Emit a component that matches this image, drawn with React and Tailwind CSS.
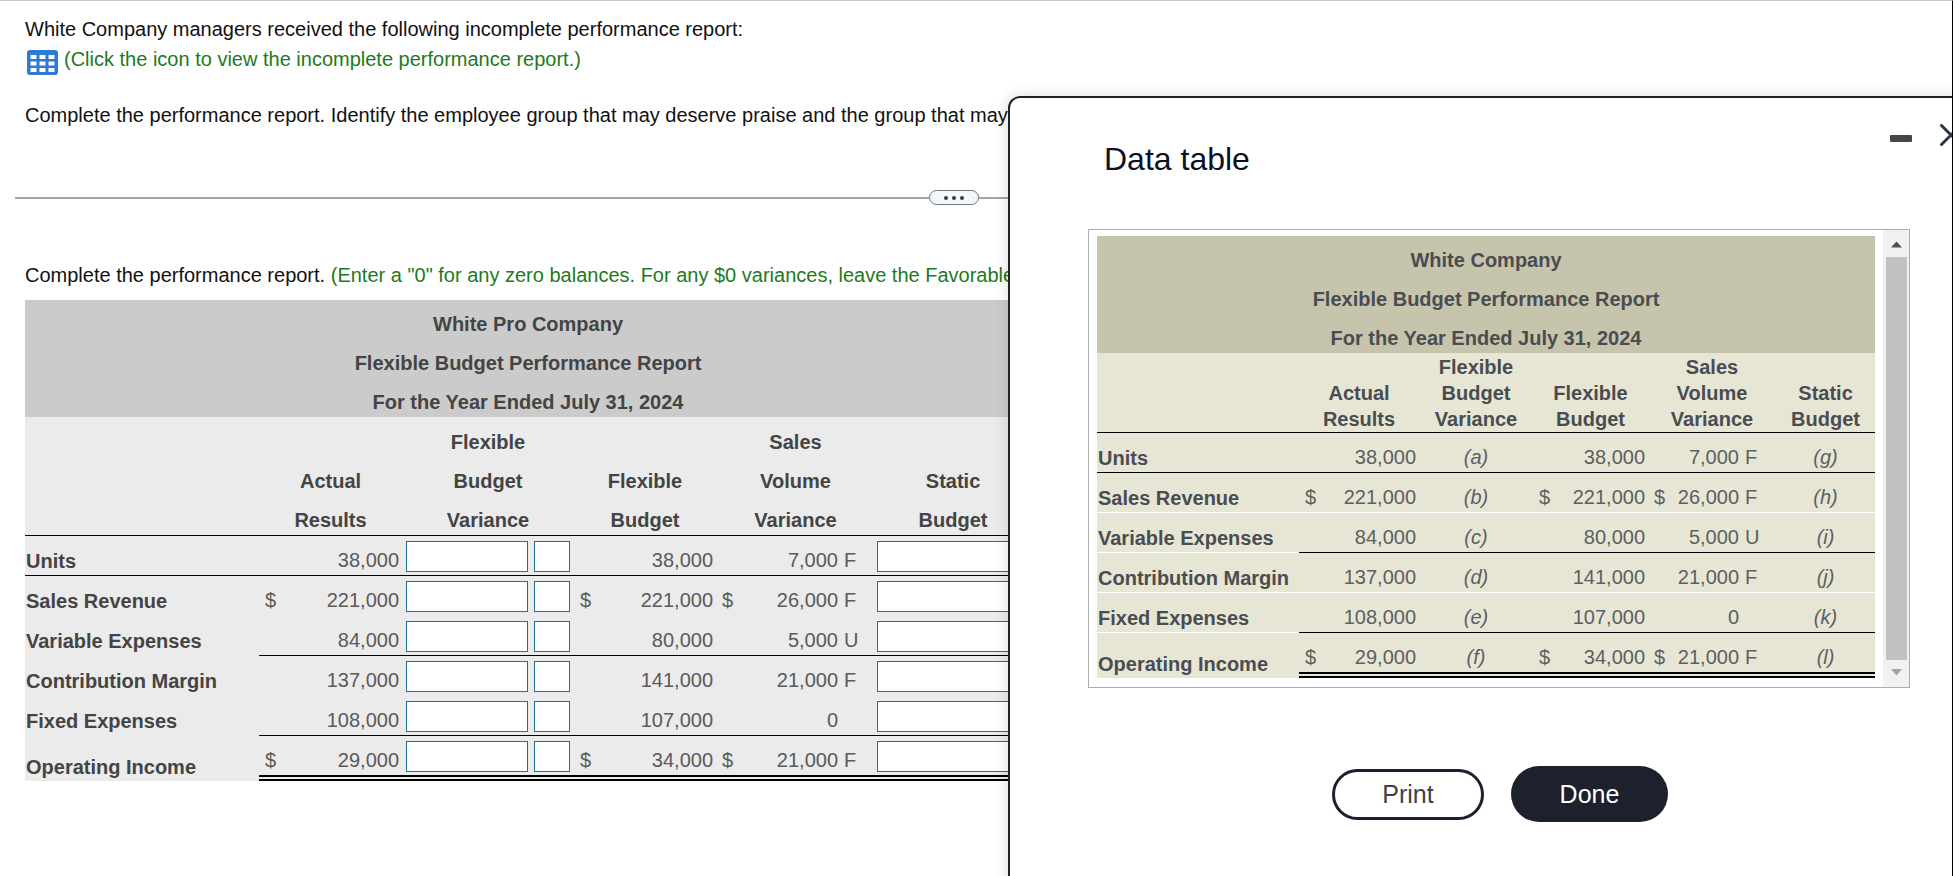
import React from "react";

const rows = [
  { label: "Units", actual: "38,000", flexible: "38,000", volume: "7,000", flag: "F", keys: ["(a)", "(g)"], line: "full" },
  { label: "Sales Revenue", dollar: true, actual: "221,000", flexible: "221,000", volume: "26,000", flag: "F", keys: ["(b)", "(h)"], line: "none" },
  { label: "Variable Expenses", actual: "84,000", flexible: "80,000", volume: "5,000", flag: "U", keys: ["(c)", "(i)"], line: "figures" },
  { label: "Contribution Margin", actual: "137,000", flexible: "141,000", volume: "21,000", flag: "F", keys: ["(d)", "(j)"], line: "none" },
  { label: "Fixed Expenses", actual: "108,000", flexible: "107,000", volume: "0", flag: "", keys: ["(e)", "(k)"], line: "figures" },
  { label: "Operating Income", dollar: true, actual: "29,000", flexible: "34,000", volume: "21,000", flag: "F", keys: ["(f)", "(l)"], line: "double" },
];

const headings = [
  ["Actual", "Results"],
  ["Flexible", "Budget", "Variance"],
  ["Flexible", "Budget"],
  ["Sales", "Volume", "Variance"],
  ["Static", "Budget"],
];

const figureLine = {
  full: "border-b border-black",
  none: "border-b border-transparent",
  figures: "border-b border-black",
  double: "border-b-6 border-double border-black",
};

const labelLine = {
  full: "border-b border-black",
  none: "border-b border-transparent",
  figures: "border-b border-transparent",
  double: "",
};

const figureLineData = {
  ...figureLine,
  none: "border-b border-white",
};

const labelLineData = {
  ...labelLine,
  none: "border-b border-white",
  figures: "border-b border-white",
};

const Amount = ({ dollar, children }) => (
  <div className="flex justify-between pl-[6px] pr-[3px]">
    <span>{dollar ? "$" : ""}</span>
    <span>{children}</span>
  </div>
);

const Volume = ({ row }) => (
  <div className="flex justify-between pl-[6px]">
    <span>{row.dollar ? "$" : ""}</span>
    <span className="flex">
      {row.volume}
      <span className="w-[37px] pl-[6px] text-left">{row.flag}</span>
    </span>
  </div>
);

const Columns = ({ widths }) => (
  <colgroup>
    {widths.map((width, i) => (
      <col key={i} style={{ width }} />
    ))}
  </colgroup>
);

const TitleRow = ({ company, className }) => (
  <tr>
    <th colSpan={6} className={`p-0 font-bold leading-[30px] ${className}`}>
      <div className="pt-[9px]">{company}</div>
      <div className="pt-[9px]">Flexible Budget Performance Report</div>
      <div className="pt-[9px]">For the Year Ended July 31, 2024</div>
    </th>
  </tr>
);

const HeadingRow = ({ className, lineClassName }) => (
  <tr className={className}>
    <td className="border-b border-black" />
    {headings.map((lines, i) => (
      <th
        key={i}
        scope="col"
        className="border-b border-black p-0 pt-[1px] align-bottom font-bold"
      >
        {lines.map((line) => (
          <div key={line} className={lineClassName}>
            {line}
          </div>
        ))}
      </th>
    ))}
  </tr>
);

const Field = ({ label, className }) => (
  <input
    type="text"
    aria-label={label}
    className={`h-[31px] rounded-none border border-[#1a7397] bg-white px-1 outline-none ${className}`}
  />
);

const AnswerTable = () => (
  <table className="w-[1006px] table-fixed border-separate border-spacing-0 bg-[#ebebeb] text-[#444444]">
    <Columns widths={[234, 143, 172, 142, 159, 156]} />
    <thead>
      <TitleRow company="White Pro Company" className="bg-[#cbcbcb]" />
      <HeadingRow className="leading-[30px]" lineClassName="pt-[9px]" />
    </thead>
    <tbody className="text-[#5a5a5a]">
      {rows.map((row) => (
        <tr key={row.label} className="leading-[30px]">
          <th
            scope="row"
            className={`p-0 pl-[1px] text-left align-bottom font-bold leading-[27px] text-[#444444] ${labelLine[row.line]}`}
          >
            {row.label}
          </th>
          <td className={`p-0 pt-[9px] ${figureLine[row.line]}`}>
            <Amount dollar={row.dollar}>{row.actual}</Amount>
          </td>
          <td className={`p-0 ${figureLine[row.line]}`}>
            <div className="flex gap-[6px] pt-[5px] pb-[3px] pl-1">
              <Field
                label={`${row.label} flexible budget variance`}
                className="w-[122px]"
              />
              <Field
                label={`${row.label} favorable or unfavorable`}
                className="w-9"
              />
            </div>
          </td>
          <td className={`p-0 pt-[9px] ${figureLine[row.line]}`}>
            <Amount dollar={row.dollar}>{row.flexible}</Amount>
          </td>
          <td className={`p-0 pt-[9px] ${figureLine[row.line]}`}>
            <Volume row={row} />
          </td>
          <td className={`p-0 ${figureLine[row.line]}`}>
            <div className="flex px-[2px] pt-[5px] pb-[3px]">
              <Field
                label={`${row.label} static budget`}
                className="w-full"
              />
            </div>
          </td>
        </tr>
      ))}
    </tbody>
  </table>
);

const DataTable = () => (
  <table className="w-[778px] table-fixed border-separate border-spacing-0 bg-[#e7e6d5] text-[#494d52]">
    <Columns widths={[202, 120, 114, 115, 128, 99]} />
    <thead>
      <TitleRow company="White Company" className="bg-[#c7c4ad]" />
      <HeadingRow className="leading-[26px]" />
    </thead>
    <tbody className="text-[#5c5f62]">
      {rows.map((row) => (
        <tr key={row.label} className="leading-[29px]">
          <th
            scope="row"
            className={`p-0 pl-[1px] text-left align-bottom font-bold leading-[27px] text-[#494d52] ${labelLineData[row.line]}`}
          >
            {row.label}
          </th>
          <td className={`p-0 pt-[10px] ${figureLineData[row.line]}`}>
            <Amount dollar={row.dollar}>{row.actual}</Amount>
          </td>
          <td className={`p-0 pt-[10px] text-center italic ${figureLineData[row.line]}`}>
            {row.keys[0]}
          </td>
          <td className={`p-0 pt-[10px] ${figureLineData[row.line]}`}>
            <Amount dollar={row.dollar}>{row.flexible}</Amount>
          </td>
          <td className={`p-0 pt-[10px] ${figureLineData[row.line]}`}>
            <Volume row={row} />
          </td>
          <td className={`p-0 pt-[10px] text-center italic ${figureLineData[row.line]}`}>
            {row.keys[1]}
          </td>
        </tr>
      ))}
    </tbody>
  </table>
);

const Scrollbar = () => (
  <div className="flex w-[26px] flex-col items-center bg-[#f1f1f1]">
    <svg className="h-[27px] w-[11px] shrink-0" viewBox="0 0 11 27">
      <path d="M0 17.5 L5.5 11.5 L11 17.5 Z" fill="#505050" />
    </svg>
    <div className="w-[21px] flex-1 bg-[#c1c1c1]" />
    <svg className="h-[27px] w-[11px] shrink-0" viewBox="0 0 11 27">
      <path d="M0 9 L11 9 L5.5 15.5 Z" fill="#a3a3a3" />
    </svg>
  </div>
);

const TableIcon = () => (
  <svg width="31" height="26" viewBox="0 0 31 26">
    <rect width="31" height="25" rx="3" fill="#2f7bd3" />
    {[5, 11.5, 18].map((y) =>
      [3.5, 12.5, 21.5].map((x) => (
        <rect key={`${x}-${y}`} x={x} y={y} width="6" height="4" rx="0.5" fill="#fff" />
      ))
    )}
  </svg>
);

const App = () => {
  return (
    <div className="relative min-h-screen overflow-hidden border-t border-r border-t-[#c9c9d8] border-r-black bg-white font-['Liberation_Sans',Arial,sans-serif] text-xl text-[#111111]">
      {/* question */}
      <div className="pt-[13px] pl-[25px] whitespace-nowrap">
        <p className="leading-[30px]">
          White Company managers received the following incomplete performance
          report:
        </p>
        <button
          type="button"
          className="flex h-[30px] items-start gap-[6px] pl-[2px] leading-[30px] text-[#1d7a1d]"
        >
          <span className="pt-[6px]">
            <TableIcon />
          </span>
          (Click the icon to view the incomplete performance report.)
        </button>
        <p className="mt-[26px] leading-[30px]">
          Complete the performance report. Identify the employee group that may
          deserve praise and the group that may be subject to criticism.
        </p>
      </div>

      {/* divider */}
      <div className="mt-[60px] mr-[60px] ml-[15px] flex items-center">
        <div className="h-[2px] flex-1 bg-[#a0a4ac]" />
        <button
          type="button"
          aria-label="Show more"
          className="flex h-[15px] w-[50px] items-center justify-center gap-[4px] rounded-full border border-[#6e7680] bg-[#f3f7fb]"
        >
          <span className="size-[4px] rounded-full bg-[#333a44]" />
          <span className="size-[4px] rounded-full bg-[#333a44]" />
          <span className="size-[4px] rounded-full bg-[#333a44]" />
        </button>
        <div className="h-[2px] flex-1 bg-[#a0a4ac]" />
      </div>

      {/* answer */}
      <div className="pt-[55px] pl-[25px] whitespace-nowrap">
        <p className="mb-[10px] leading-[30px]">
          Complete the performance report.{" "}
          <span className="text-[#1d7a1d]">
            (Enter a "0" for any zero balances. For any $0 variances, leave the
            Favorable (F)/Unfavorable (U) input blank.)
          </span>
        </p>
        <AnswerTable />
      </div>

      {/* data table dialog */}
      <section
        role="dialog"
        aria-labelledby="dialog-title"
        className="absolute top-[95px] -right-10 -bottom-10 left-[1008px] rounded-[12px] border-2 border-[#222226] bg-white shadow-[0_0_14px_rgba(0,0,0,0.15)]"
      >
        <div className="flex items-start justify-between pt-[26px] pr-[28px] pl-[94px]">
          <h1
            id="dialog-title"
            className="pt-[15px] text-[32px] leading-10 text-[#0c1024]"
          >
            Data table
          </h1>
          <div className="flex items-center gap-[28px]">
            <button type="button" aria-label="Minimize" className="pt-[7px]">
              <span className="block h-[7px] w-[22px] rounded-[1px] bg-[#474747]" />
            </button>
            <button type="button" aria-label="Close">
              <svg width="22" height="22" viewBox="0 0 22 22">
                <path
                  d="M1.5 1.5 L20.5 20.5 M20.5 1.5 L1.5 20.5"
                  stroke="#2c3648"
                  strokeWidth="3"
                  strokeLinecap="round"
                />
              </svg>
            </button>
          </div>
        </div>

        <div className="mt-[50px] ml-[78px] flex w-[822px] border border-[#adadad]">
          <div className="flex-1 pt-[6px] pb-[9px] pl-[8px]">
            <DataTable />
          </div>
          <Scrollbar />
        </div>

        <div className="mt-[78px] ml-[79px] flex w-[822px] items-center justify-center gap-[27px] text-[25px]">
          <button
            type="button"
            className="h-[51px] w-[152px] rounded-full border-[3px] border-[#1b2130] text-[#3d414b]"
          >
            Print
          </button>
          <button
            type="button"
            className="h-14 w-[157px] rounded-full bg-[#1c212d] text-white"
          >
            Done
          </button>
        </div>
      </section>
    </div>
  );
};

export default App;
